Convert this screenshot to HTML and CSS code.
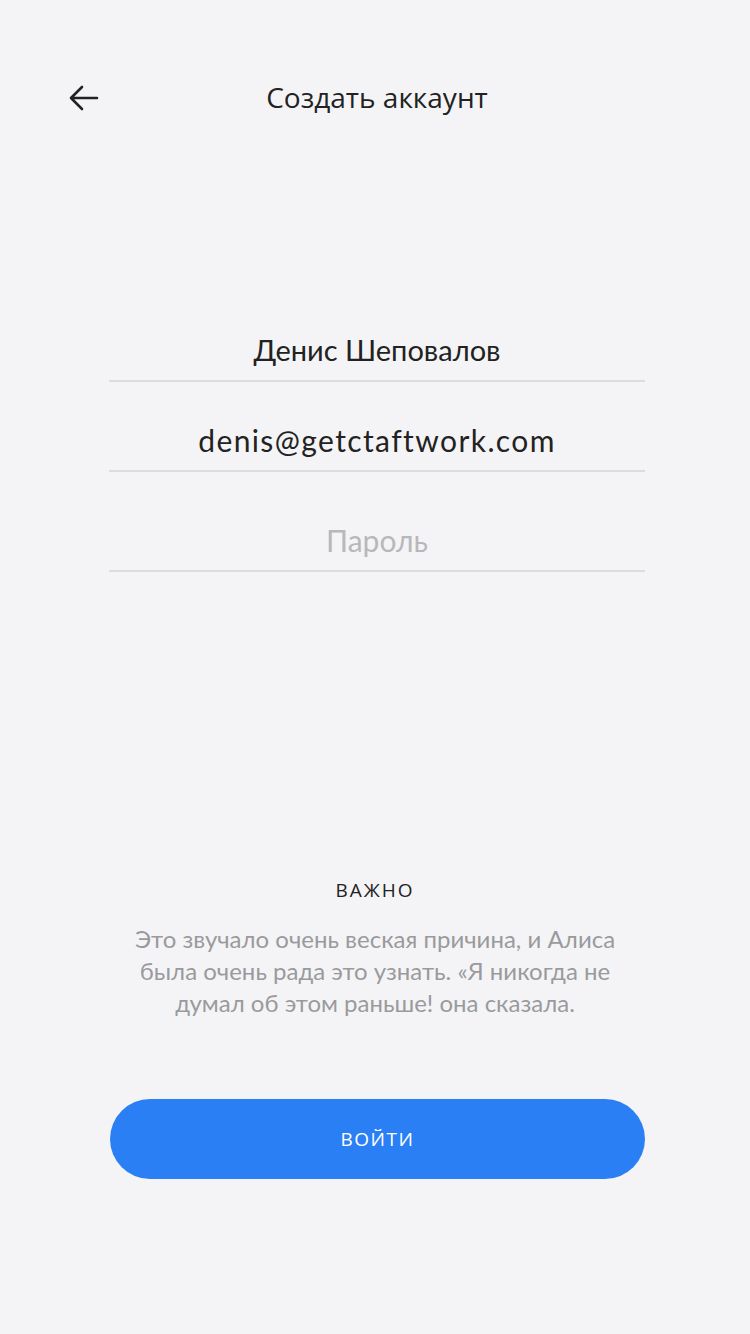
FILE: index.html
```html
<!DOCTYPE html>
<html lang="ru">
<head>
<meta charset="utf-8">
<link rel="stylesheet" href="styles.css">
</head>
<body>
<div class="screen">
  <header class="header">
    <button class="back" aria-label="Назад">
      <svg width="32" height="28" viewBox="0 0 32 28"><path d="M29 14H3M14 3L3 14l11 11" fill="none" stroke="#222" stroke-width="2.6" stroke-linecap="round" stroke-linejoin="round"/></svg>
    </button>
    <h1 class="title">Создать аккаунт</h1>
  </header>
  <form class="form">
    <div class="field f1">Денис Шеповалов</div>
    <div class="field f2">denis@getctaftwork.com</div>
    <div class="field f3 placeholder">Пароль</div>
  </form>
  <section class="note">
    <h2 class="note-title">ВАЖНО</h2>
    <p class="note-text">Это звучало очень веская причина, и Алиса<br>была очень рада это узнать. «Я никогда не<br>думал об этом раньше! она сказала.</p>
  </section>
  <div class="actions">
    <button class="btn" type="button">ВОЙТИ</button>
  </div>
</div>
</body>
</html>
```
FILE: styles.css
```css
html, body {
  margin: 0;
  padding: 0;
  background: #f4f4f6;
}
.screen {
  width: 750px;
  height: 1334px;
  box-sizing: border-box;
  padding-top: 60px;
  font-family: "Open Sans", "Noto Sans", sans-serif;
  color: #222;
}
.header {
  height: 76px;
  display: flex;
  align-items: center;
  position: relative;
  padding-left: 68px;
}
.back {
  border: 0;
  background: none;
  padding: 0;
  width: 32px;
  height: 28px;
  display: flex;
}
.title {
  position: absolute;
  left: 0;
  right: 0;
  top: -1px;
  margin: 0;
  text-align: center;
  line-height: 76px;
  font-size: 28px;
  font-weight: 400;
  padding-left: 4px;
  color: #222;
  pointer-events: none;
}
.form {
  margin: 154px 105px 0 109px;
  display: flex;
  flex-direction: column;
}
.field {
  font-family: "Lato", "Noto Sans", sans-serif;
  font-size: 30px;
  line-height: 40px;
  text-align: center;
  padding-bottom: 10px;
  border-bottom: 2px solid #dcdcdf;
  color: #222;
}
.f1 { padding-top: 40px; font-size: 29px; }
.f2 { padding-top: 38px; letter-spacing: 1.4px; }
.f3 { padding-top: 48px; }
.placeholder { color: #b8b8bb; }
.note {
  margin-top: 305px;
  text-align: center;
}
.note-title {
  margin: 0;
  font-family: "Open Sans", "Noto Sans", sans-serif;
  font-size: 19px;
  line-height: 26px;
  font-weight: 400;
  letter-spacing: 2px;
  color: #222;
}
.note-text {
  margin: 20px 0 0;
  font-family: "Lato", "Noto Sans", sans-serif;
  font-size: 24px;
  line-height: 32px;
  color: #9a9a9d;
}
.actions {
  margin: 80px 105px 0 110px;
}
.btn {
  width: 100%;
  height: 80px;
  border: 0;
  border-radius: 40px;
  background: #2a7ff4;
  color: #fff;
  font-family: "Open Sans", "Noto Sans", sans-serif;
  font-size: 19px;
  letter-spacing: 1.5px;
  display: block;
}
```
